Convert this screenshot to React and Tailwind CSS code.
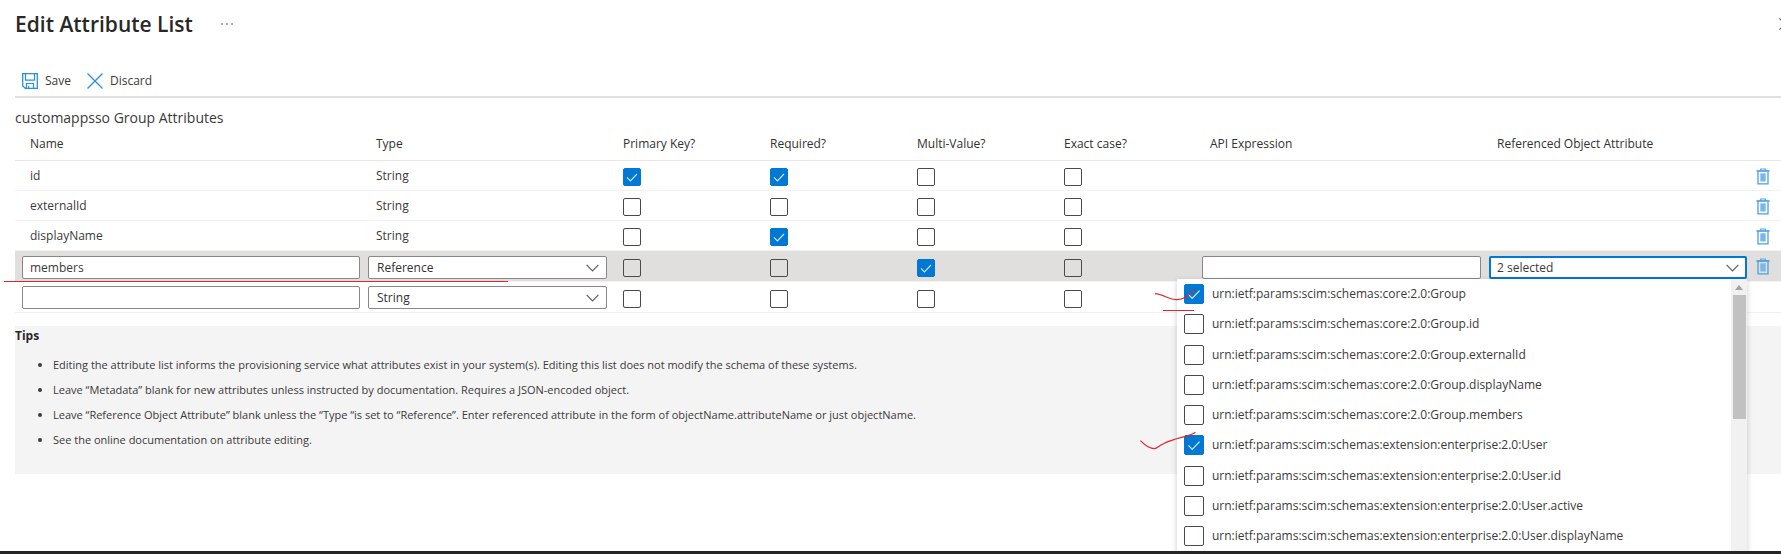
import React from "react";

const attributes = [
  { name: "id", type: "String", flags: [true, true, false, false] },
  { name: "externalId", type: "String", flags: [false, false, false, false] },
  { name: "displayName", type: "String", flags: [false, true, false, false] },
];

const flagNames = ["Primary Key", "Required", "Multi-Value", "Exact case"];

const options = [
  { label: "urn:ietf:params:scim:schemas:core:2.0:Group", checked: true },
  { label: "urn:ietf:params:scim:schemas:core:2.0:Group.id" },
  { label: "urn:ietf:params:scim:schemas:core:2.0:Group.externalId" },
  { label: "urn:ietf:params:scim:schemas:core:2.0:Group.displayName" },
  { label: "urn:ietf:params:scim:schemas:core:2.0:Group.members" },
  { label: "urn:ietf:params:scim:schemas:extension:enterprise:2.0:User", checked: true },
  { label: "urn:ietf:params:scim:schemas:extension:enterprise:2.0:User.id" },
  { label: "urn:ietf:params:scim:schemas:extension:enterprise:2.0:User.active" },
  { label: "urn:ietf:params:scim:schemas:extension:enterprise:2.0:User.displayName" },
];

const tips = [
  "Editing the attribute list informs the provisioning service what attributes exist in your system(s). Editing this list does not modify the schema of these systems.",
  "Leave “Metadata” blank for new attributes unless instructed by documentation. Requires a JSON-encoded object.",
  "Leave “Reference Object Attribute” blank unless the “Type “is set to “Reference”. Enter referenced attribute in the form of objectName.attributeName or just objectName.",
  "See the online documentation on attribute editing.",
];

function SaveIcon() {
  return (
    <svg width="16" height="16" viewBox="0 0 16 16" fill="none" stroke="#2b8fe0" aria-hidden="true">
      <path d="M.7.7h14.6v14.6H3.2L.7 12.8z" strokeWidth="1.3" />
      <path d="M3.5.7v6.5h9V.7M4.5 15v-4.5h7V15M6.7 15v-2.3" strokeWidth="1.2" />
    </svg>
  );
}

function CrossIcon({ className, size = 16 }) {
  return (
    <svg width={size} height={size} viewBox="0 0 16 16" fill="none" stroke="currentColor" strokeWidth="1.4" className={className} aria-hidden="true">
      <path d="M.5.5l15 15M15.5.5l-15 15" />
    </svg>
  );
}

function TrashIcon() {
  return (
    <svg width="14" height="17" viewBox="0 0 14 17" fill="none" aria-hidden="true">
      <path d="M4.7 2.5V1h4.6v1.5" stroke="#5aa9e6" strokeWidth="1.2" />
      <path d="M0.5 3h13" stroke="#1b84d8" strokeWidth="1.3" />
      <path d="M2 3.5v12.3h10V3.5" stroke="#4ba1e4" strokeWidth="1.3" />
      <path d="M4.3 5.3h5.4v8.2H4.3z" fill="#7ab8ea" />
    </svg>
  );
}

function Chevron() {
  return (
    <svg width="13" height="8" viewBox="0 0 13 8" fill="none" stroke="#605e5c" strokeWidth="1.2" className="pointer-events-none absolute top-2 right-2" aria-hidden="true">
      <path d="M.6.8l5.9 6L12.4.8" />
    </svg>
  );
}

function Checkbox({ label, checked, large }) {
  return (
    <span className={`relative block shrink-0 ${large ? "size-5" : "size-[18px]"}`}>
      <input
        type="checkbox"
        aria-label={label}
        defaultChecked={checked}
        className="peer block size-full appearance-none rounded-xs border border-[#4a4948] checked:border-[#0078d4] checked:bg-[#0078d4]"
      />
      <svg viewBox="0 0 18 18" fill="none" stroke="#d5e9f8" strokeWidth="1.1" className="pointer-events-none absolute inset-0 hidden size-full peer-checked:block" aria-hidden="true">
        <path d="M4 9.3l3.4 3.6L14 6" />
      </svg>
    </span>
  );
}

function FlagCells({ row, flags }) {
  return flags.map((on, i) => (
    <td key={flagNames[i]} className="pt-1 pl-3">
      <Checkbox label={`${row} ${flagNames[i]}`} checked={on} />
    </td>
  ));
}

function DeleteCell({ row }) {
  return (
    <td className="pt-0.5 pl-[5px]">
      <button type="button" aria-label={`Delete ${row}`} className="block">
        <TrashIcon />
      </button>
    </td>
  );
}

function TypeSelect({ label, value }) {
  return (
    <div className="relative">
      <select aria-label={label} defaultValue={value} className="block h-[23px] w-full appearance-none rounded-xs border border-[#8a8886] bg-white pl-2 text-[#323130]">
        <option>String</option>
        <option>Reference</option>
      </select>
      <Chevron />
    </div>
  );
}

function ReferencePicker() {
  return (
    <div className="relative">
      <button type="button" aria-haspopup="listbox" aria-expanded="true" className="block h-[23px] w-full rounded-xs border-2 border-[#0078d4] bg-white pl-1.5 text-left">
        2 selected
      </button>
      <Chevron />
      <div className="absolute top-full right-0 z-10 flex h-[272px] w-[570px] bg-white shadow-[0_2px_6px_rgba(0,0,0,0.2)]">
        <div className="flex flex-1 flex-col justify-between pl-[7px]">
          {options.map((o) => (
            <label key={o.label} className="flex h-[30px] items-center gap-2">
              <Checkbox label={o.label} checked={o.checked} large />
              <span className="whitespace-nowrap">{o.label}</span>
            </label>
          ))}
        </div>
        <div className="flex w-4 flex-col items-center bg-[#f1f1f1]">
          <div className="flex h-4 items-center">
            <svg width="8" height="5" viewBox="0 0 8 5" fill="#a3a3a3" aria-hidden="true">
              <path d="M4 0l4 5H0z" />
            </svg>
          </div>
          <div className="h-[124px] w-[13px] bg-[#c1c1c1]" />
        </div>
      </div>
    </div>
  );
}

export default function App() {
  return (
    <div className="relative flex min-h-screen flex-col overflow-hidden bg-white font-['Open_Sans','Noto_Sans',sans-serif] text-[12px] leading-4 text-[#3b3a39]">
      <header className="flex h-12 items-center pl-[15px]">
        <h1 className="text-[21px] leading-7 font-semibold text-[#292827]">Edit Attribute List</h1>
        <button type="button" aria-label="More options" className="ml-7 flex gap-[3px]">
          <i className="size-0.5 rounded-full bg-[#8a8886]" />
          <i className="size-0.5 rounded-full bg-[#8a8886]" />
          <i className="size-0.5 rounded-full bg-[#8a8886]" />
        </button>
        <button type="button" aria-label="Close" className="-mr-[10px] ml-auto">
          <CrossIcon size={12} className="text-[#605e5c]" />
        </button>
      </header>

      <div className="ml-[15px] flex h-[50px] items-center gap-4 border-b-2 border-[#e1e1e1] pt-[18px] pl-[7px]">
        <button type="button" className="flex items-center gap-[7px]">
          <SaveIcon />
          Save
        </button>
        <button type="button" className="flex items-center gap-[7px]">
          <CrossIcon className="text-[#2b8fe0]" />
          Discard
        </button>
      </div>

      <main className="pl-[15px]">
        <h2 className="pt-[10px] text-[14px] leading-5">customappsso Group Attributes</h2>
        <table className="w-full table-fixed border-collapse text-left">
          <colgroup>
            <col />
            <col className="w-[247px]" />
            <col className="w-[147px]" />
            <col className="w-[147px]" />
            <col className="w-[147px]" />
            <col className="w-[146px]" />
            <col className="w-[287px]" />
            <col className="w-[266px]" />
            <col className="w-[30px]" />
          </colgroup>
          <thead>
            <tr className="h-8 border-b border-[#e8e8e8] text-[#323130]">
              <th className="pl-[15px] font-medium">Name</th>
              <th className="pl-3 font-medium">Type</th>
              <th className="pl-3 font-medium">Primary Key?</th>
              <th className="pl-3 font-medium">Required?</th>
              <th className="pl-3 font-medium">Multi-Value?</th>
              <th className="pl-3 font-medium">Exact case?</th>
              <th className="pl-3 font-medium">API Expression</th>
              <th className="pl-3 font-medium">Referenced Object Attribute</th>
              <td />
            </tr>
          </thead>
          <tbody>
            {attributes.map((a) => (
              <tr key={a.name} className="h-[30px] border-b border-[#f3f2f1]">
                <td className="pt-0.5 pl-[15px]">{a.name}</td>
                <td className="pt-0.5 pl-3">{a.type}</td>
                <FlagCells row={a.name} flags={a.flags} />
                <td />
                <td />
                <DeleteCell row={a.name} />
              </tr>
            ))}
            <tr className="h-[31px] border-b border-[#f3f2f1] bg-[#e1dfdd]">
              <td className="pt-1 pr-1 pl-[7px]">
                <input type="text" aria-label="Attribute name" defaultValue="members" className="block h-[23px] w-full rounded-xs border border-[#8a8886] bg-white px-[7px]" />
              </td>
              <td className="px-1 pt-1">
                <TypeSelect label="members type" value="Reference" />
              </td>
              <FlagCells row="members" flags={[false, false, true, false]} />
              <td className="px-1 pt-1">
                <input type="text" aria-label="API expression" className="block h-[23px] w-full rounded-xs border border-[#8a8886] bg-white px-[7px]" />
              </td>
              <td className="px-1 pt-1">
                <ReferencePicker />
              </td>
              <DeleteCell row="members" />
            </tr>
            <tr className="h-[31px] border-b border-[#f3f2f1]">
              <td className="pt-0.5 pr-1 pl-[7px]">
                <input type="text" aria-label="New attribute name" className="block h-[23px] w-full rounded-xs border border-[#8a8886] bg-white px-[7px]" />
              </td>
              <td className="px-1 pt-0.5">
                <TypeSelect label="New attribute type" value="String" />
              </td>
              <FlagCells row="New attribute" flags={[false, false, false, false]} />
              <td />
              <td />
              <td />
            </tr>
          </tbody>
        </table>

        <section className="mt-[13px] bg-[#f4f4f4] pt-0.5 pb-[22px]">
          <h3 className="font-bold text-[#292827]">Tips</h3>
          <ul className="mt-2 list-disc pl-[38px] text-[11px] leading-[25px]">
            {tips.map((t) => (
              <li key={t}>{t}</li>
            ))}
          </ul>
        </section>
      </main>

      <footer className="relative z-20 mt-auto h-[3px] bg-[#252423]" />

      <svg width="1200" height="460" viewBox="0 0 1200 460" fill="none" stroke="#e3242b" strokeWidth="1.2" className="pointer-events-none absolute top-0 left-0 z-20" aria-hidden="true">
        <path d="M4 281.5h504M1163 310.5h31" />
        <path d="M1155 293.7c8 .5 14 6 22 6s12-5 18-10.4" />
        <path d="M1140.4 440.7c4 4 9 8 14 8 3 0 4-3 9-5 12-6 26-7 32-11.5" />
      </svg>
    </div>
  );
}
